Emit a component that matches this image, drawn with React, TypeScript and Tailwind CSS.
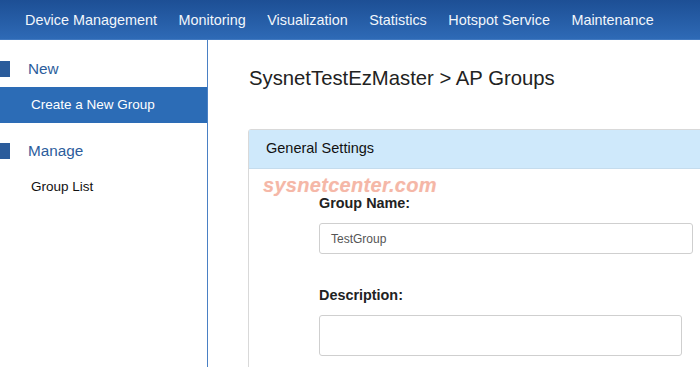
import React from "react";

const navItems = [
  "Device Management",
  "Monitoring",
  "Visualization",
  "Statistics",
  "Hotspot Service",
  "Maintenance",
];

export default function App() {
  return (
    <div
      className="w-[700px] h-[367px] overflow-hidden bg-white flex flex-col"
      style={{ fontFamily: '"Liberation Sans", Arial, sans-serif' }}
    >
      {/* Top navigation */}
      <div className="h-[40px] shrink-0 bg-gradient-to-b from-[#1d4f95] to-[#2e6ab6] border-b border-[#4179c0] flex items-center pl-[25px] gap-[21.5px] pt-[2px]">
        {navItems.map((n) => (
          <span key={n} className="text-[14.4px] text-[#f2f6fb] whitespace-nowrap">
            {n}
          </span>
        ))}
      </div>

      <div className="flex flex-1 min-h-0">
        {/* Sidebar */}
        <div className="w-[208px] shrink-0 border-r border-[#4a80c4] pt-[21px]">
          <div className="flex items-center h-[16px]">
            <div className="w-[10px] h-[16px] bg-[#2b5c9b]" />
            <span className="ml-[18px] text-[15.3px] text-[#2c5d9c] leading-[16px]">New</span>
          </div>
          <div className="mt-[10px] h-[36px] bg-[#2c6cb6] flex items-center pl-[31px] text-[13.5px] text-white">
            Create a New Group
          </div>
          <div className="flex items-center h-[16px] mt-[20px]">
            <div className="w-[10px] h-[16px] bg-[#2b5c9b]" />
            <span className="ml-[18px] text-[15.3px] text-[#2c5d9c] leading-[16px]">Manage</span>
          </div>
          <div className="mt-[10px] h-[36px] flex items-center pl-[31px] text-[13.5px] text-[#111]">
            Group List
          </div>
        </div>

        {/* Main content */}
        <div className="flex-1 min-w-0 overflow-hidden pl-[40px] pt-[26px]">
          <div className="text-[20.3px] leading-[24px] text-[#222] whitespace-nowrap pl-[1px]">
            SysnetTestEzMaster &gt; AP Groups
          </div>

          <div className="mt-[39px] w-[520px] border border-[#d9d9d9] rounded-t-[3px]">
            <div className="h-[39px] bg-[#cfe9fb] border-b border-[#c5dced] flex items-center pl-[17px] text-[14.5px] text-[#111]">
              General Settings
            </div>
            <div className="relative pl-[70px] pt-[24px] pb-[20px]">
              <span
                className="absolute left-[14px] top-[8px] text-[20px] font-bold italic text-[#f5b7a7] leading-[16px] whitespace-nowrap tracking-[0.3px]"
                style={{ textShadow: "0 0 1px #fde6df" }}
              >
                sysnetcenter.com
              </span>
              <div className="text-[14.4px] font-bold text-[#222] leading-[20px]">Group Name:</div>
              <div className="mt-[10px] w-[374px] h-[31px] border border-[#cfcfcf] rounded-[3px] flex items-center pl-[11px] text-[12px] text-[#555]">
                TestGroup
              </div>
              <div className="mt-[31px] text-[14.4px] font-bold text-[#222] leading-[20px]">Description:</div>
              <div className="mt-[10px] w-[363px] h-[41px] border border-[#cfcfcf] rounded-[3px]" />
            </div>
          </div>
        </div>
      </div>
    </div>
  );
}
